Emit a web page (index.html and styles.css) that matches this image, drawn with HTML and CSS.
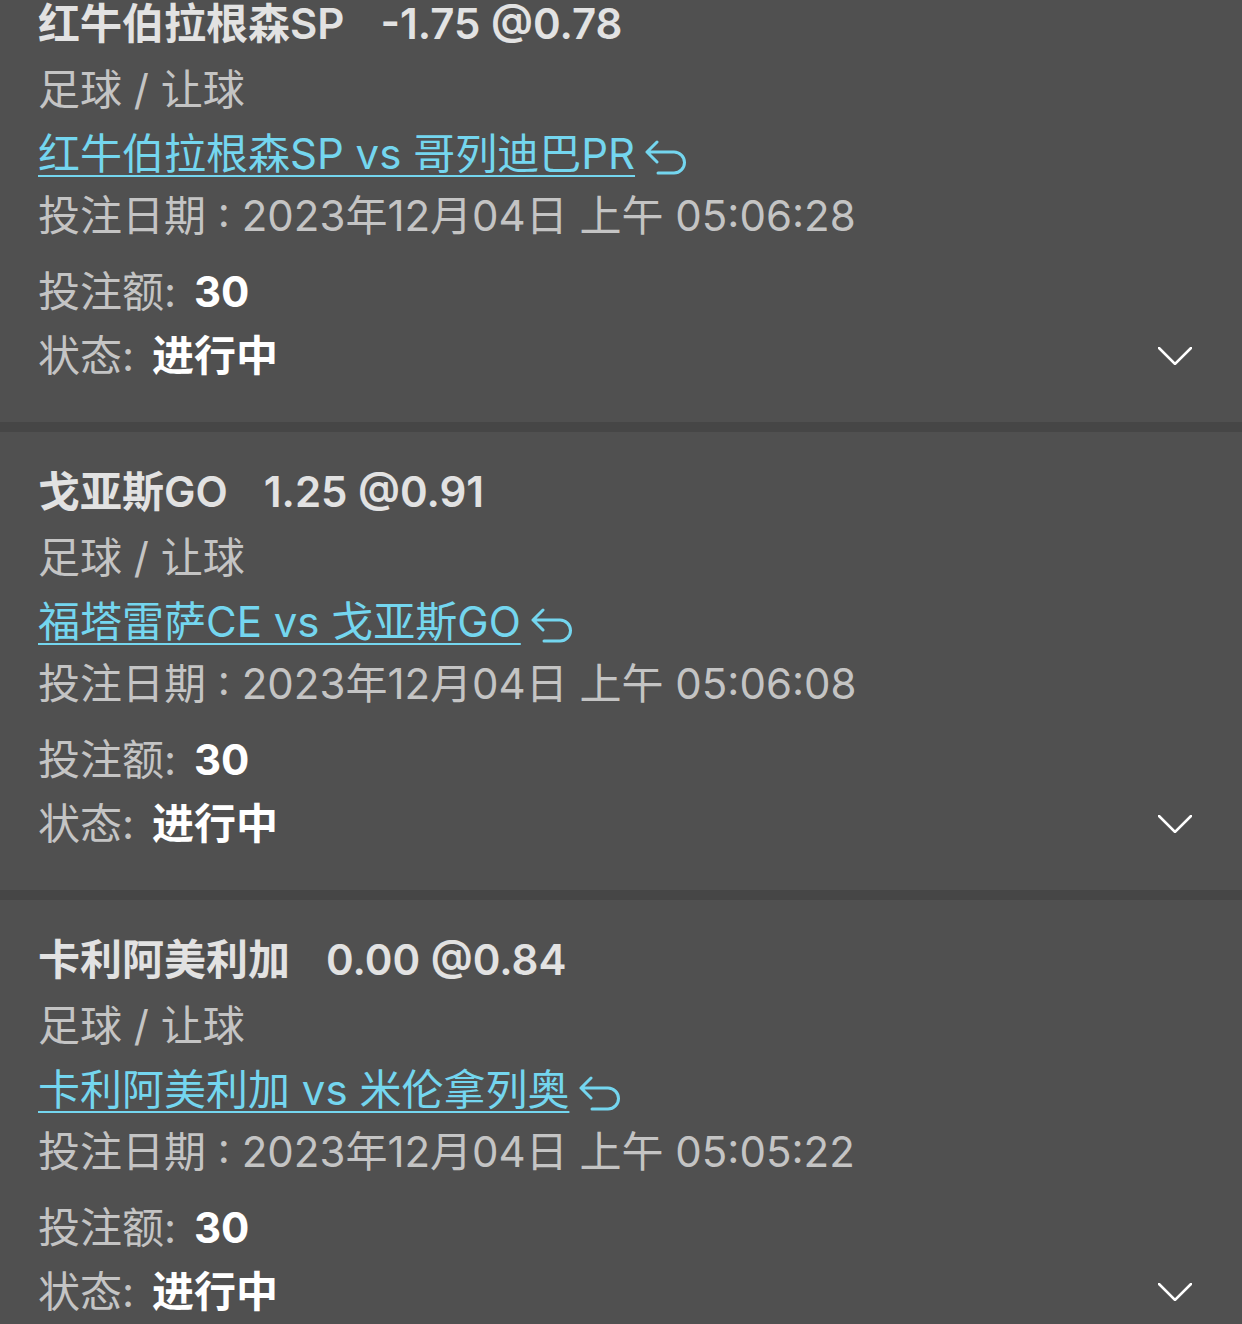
FILE: index.html
```html
<!DOCTYPE html>
<html lang="zh-CN">
<head>
  <meta charset="UTF-8">
  <title>投注记录</title>
  <link rel="stylesheet" href="styles.css">
</head>
<body>
  <div class="list">

    <div class="bet">
      <div class="title"><span>红牛伯拉根森SP</span><span class="odds">-1.75 @0.78</span></div>
      <div class="sub">足球 / 让球</div>
      <div class="match">
        <a href="#">红牛伯拉根森SP vs 哥列迪巴PR</a>
        <svg class="back" viewBox="0 0 42 36" width="42" height="36"><path d="M12 2 L2 12 L12 22 M2 12 H29 A10.5 10.5 0 0 1 29 33 H13"/></svg>
      </div>
      <div class="date">投注日期 : 2023年12月04日 上午 05:06:28</div>
      <div class="row amount">投注额: <b>30</b></div>
      <div class="row status">
        <span>状态: <b>进行中</b></span>
        <svg class="chevron" viewBox="0 0 34 18" width="34" height="18"><path d="M1 1 L17 17 L33 1"/></svg>
      </div>
    </div>

    <div class="bet">
      <div class="title"><span>戈亚斯GO</span><span class="odds">1.25 @0.91</span></div>
      <div class="sub">足球 / 让球</div>
      <div class="match">
        <a href="#">福塔雷萨CE vs 戈亚斯GO</a>
        <svg class="back" viewBox="0 0 42 36" width="42" height="36"><path d="M12 2 L2 12 L12 22 M2 12 H29 A10.5 10.5 0 0 1 29 33 H13"/></svg>
      </div>
      <div class="date">投注日期 : 2023年12月04日 上午 05:06:08</div>
      <div class="row amount">投注额: <b>30</b></div>
      <div class="row status">
        <span>状态: <b>进行中</b></span>
        <svg class="chevron" viewBox="0 0 34 18" width="34" height="18"><path d="M1 1 L17 17 L33 1"/></svg>
      </div>
    </div>

    <div class="bet">
      <div class="title"><span>卡利阿美利加</span><span class="odds">0.00 @0.84</span></div>
      <div class="sub">足球 / 让球</div>
      <div class="match">
        <a href="#">卡利阿美利加 vs 米伦拿列奥</a>
        <svg class="back" viewBox="0 0 42 36" width="42" height="36"><path d="M12 2 L2 12 L12 22 M2 12 H29 A10.5 10.5 0 0 1 29 33 H13"/></svg>
      </div>
      <div class="date">投注日期 : 2023年12月04日 上午 05:05:22</div>
      <div class="row amount">投注额: <b>30</b></div>
      <div class="row status">
        <span>状态: <b>进行中</b></span>
        <svg class="chevron" viewBox="0 0 34 18" width="34" height="18"><path d="M1 1 L17 17 L33 1"/></svg>
      </div>
    </div>

  </div>
</body>
</html>
```

FILE: styles.css
```css
body {
  margin: 0;
  background: #464646;
  font-family: Inter, "Noto Sans CJK SC", sans-serif;
  font-size: 42px;
  color: #c4c4c4;
  overflow: hidden;
}

/* list is scrolled a little, first card is cut at the top */
.list {
  margin-top: -36px;
  display: flex;
  flex-direction: column;
  gap: 10px;
}

.bet {
  background: #505050;
  padding: 28px 50px 34px 38px;
}

.bet > div {
  line-height: 64px;
  height: 64px;
  white-space: nowrap;
}

.title {
  font-weight: 600;
  color: #e2e2e2;
  margin-bottom: 2px;
}

.title .odds {
  margin-left: 36px;
}

.match {
  display: flex;
  align-items: center;
}

.match a {
  color: #74d6ef;
  text-decoration: underline;
  text-decoration-thickness: 2px;
  text-underline-offset: 6px;
}

.back {
  margin-left: 10px;
  margin-top: 8px;
  fill: none;
  stroke: #74d6ef;
  stroke-width: 3;
  stroke-linecap: round;
  stroke-linejoin: round;
}

.date {
  margin-top: -2px;
}

.amount {
  margin-top: 12px;
}

.row b {
  color: #ffffff;
  font-weight: bold;
  margin-left: 6px;
}

.status {
  display: flex;
  justify-content: space-between;
  align-items: center;
}

.chevron {
  fill: none;
  stroke: #ffffff;
  stroke-width: 2.5;
  stroke-linecap: round;
  stroke-linejoin: miter;
}
```
